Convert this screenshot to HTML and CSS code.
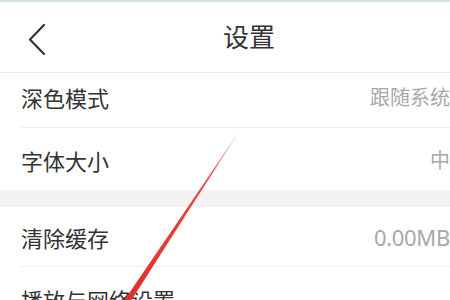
FILE: index.html
```html
<!DOCTYPE html>
<html lang="zh">
<head>
<meta charset="utf-8">
<title>设置</title>
<link rel="stylesheet" href="styles.css">
</head>
<body>
<div class="page">
  <div class="topline"></div>
  <header class="header">
    <svg class="back" width="20" height="34" viewBox="0 0 20 34">
      <polyline points="16,2 2,16.5 16,31" fill="none" stroke="#333" stroke-width="2.2" stroke-linecap="round" stroke-linejoin="round"/>
    </svg>
    <h1 class="title">设置</h1>
  </header>
  <div class="group">
    <div class="row row-a">
      <span class="label">深色模式</span>
      <span class="value">跟随系统</span>
    </div>
    <div class="row row-b">
      <span class="label">字体大小</span>
      <span class="value">中</span>
    </div>
  </div>
  <div class="band"></div>
  <div class="group">
    <div class="row row-c">
      <span class="label">清除缓存</span>
      <span class="value num">0.00MB</span>
    </div>
    <div class="row row-d">
      <span class="label">播放与网络设置</span>
      <span class="value"></span>
    </div>
  </div>
  <svg class="arrow" width="450" height="300" viewBox="0 0 450 300">
    <defs>
      <linearGradient id="g" x1="238" y1="133" x2="128" y2="300" gradientUnits="userSpaceOnUse">
        <stop offset="0" stop-color="#f2a0a0"/>
        <stop offset="0.25" stop-color="#e64a45"/>
        <stop offset="1" stop-color="#e0302b"/>
      </linearGradient>
    </defs>
    <polygon points="238.5,132.5 124.5,300 131.5,300" fill="url(#g)"/>
  </svg>
</div>
</body>
</html>
```
FILE: styles.css
```css
* { box-sizing: border-box; margin: 0; padding: 0; }
html, body { width: 450px; height: 300px; overflow: hidden; background: #fff; }
body {
  font-family: "Noto Sans CJK SC", "Noto Sans", sans-serif;
  color: #333;
}
.page { position: relative; width: 450px; height: 300px; overflow: hidden; }
.topline { height: 2px; background: #d3dfe9; }
.header {
  height: 71px;
  display: flex;
  align-items: center;
  justify-content: center;
  position: relative;
  border-bottom: 1px solid #ececec;
  background: #fff;
}
.back { position: absolute; left: 28px; top: 21px; }
.title {
  font-size: 26px;
  font-weight: 400;
  color: #333;
  line-height: 1;
  margin-left: 48px;
  margin-top: -2px;
}
.row {
  display: flex;
  align-items: center;
  justify-content: space-between;
  padding-left: 21px;
  position: relative;
}
.label { font-size: 22px; line-height: 1; color: #333; }
.value { font-size: 20px; line-height: 1; color: #a8a8a8; }
.value.num { font-size: 22px; font-family: "Noto Sans", "Noto Sans CJK SC", sans-serif; letter-spacing: -0.3px; }
.row-a { height: 55px; padding-bottom: 6px; border-bottom: 1px solid #efefef; margin-left: 20px; padding-left: 1px; }
.row-b { height: 62px; padding-top: 1px; }
.band { height: 17px; background: #f2f2f2; }
.row-c { height: 60px; margin-left: 20px; padding-left: 1px; border-bottom: 1px solid #efefef; }
.row-d { height: 60px; align-items: flex-start; padding-top: 21px; }
.arrow { position: absolute; left: 0; top: 0; pointer-events: none; }
```
